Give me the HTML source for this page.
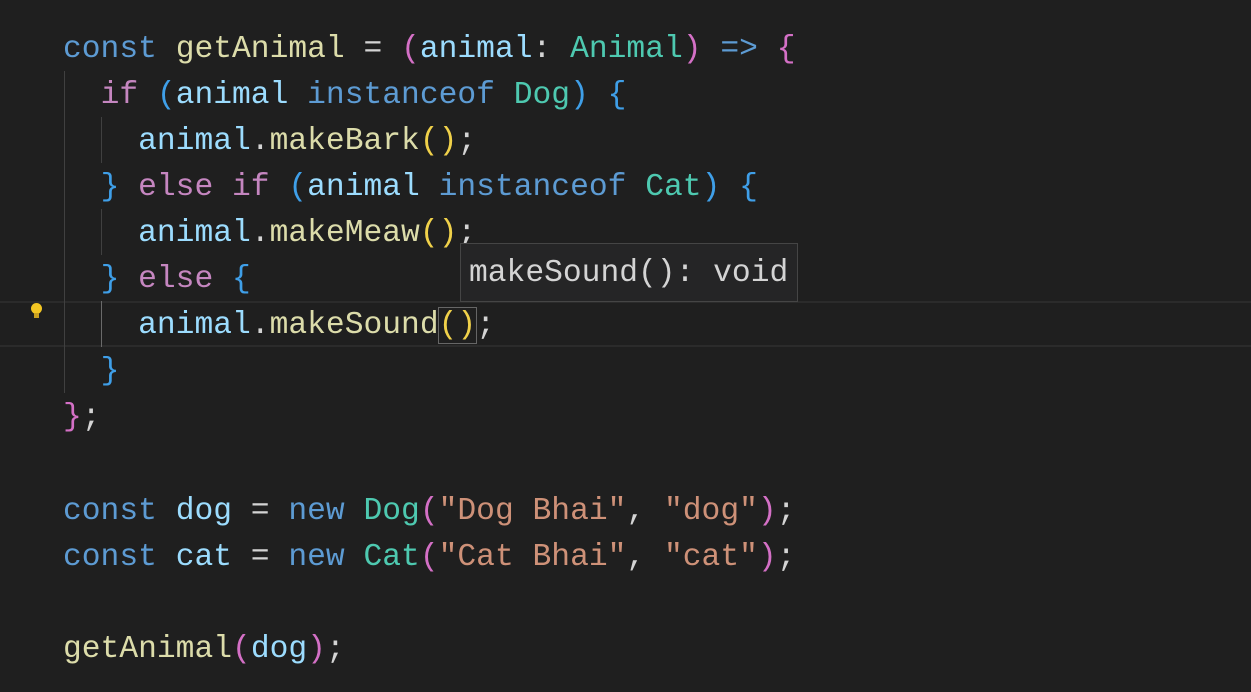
<!DOCTYPE html>
<html><head><style>
html,body{margin:0;padding:0;background:#1f1f1f;width:1251px;height:692px;overflow:hidden}
.l{position:absolute;left:63px;height:46px;line-height:46px;font-family:"Liberation Mono",monospace;font-size:31.3px;color:#d4d4d4;white-space:pre;letter-spacing:0}
.k{color:#5d9bd3}.f{color:#dcdcaa}.v{color:#9cdcfe}.c{color:#c586c0}.t{color:#4ec9b0}.s{color:#ce9178}
.p1{color:#d470c6}.p2{color:#3f9fe8}.p3{color:#f0d14a}
.g{position:absolute;width:1px;background:#404040}
</style></head><body>
<div style="position:absolute;left:0;top:301px;width:1251px;height:46px;border-top:2px solid #2b2b2b;border-bottom:2px solid #2b2b2b;box-sizing:border-box"></div>
<div class="g" style="left:64px;top:71px;height:322px"></div>
<div class="g" style="left:101px;top:117px;height:46px"></div>
<div class="g" style="left:101px;top:209px;height:46px"></div>
<div class="g" style="left:101px;top:301px;height:46px;background:#6a6a6a"></div>
<div style="position:absolute;left:31px;top:303px;width:11px;height:11px;border-radius:50%;background:#f3c623"></div>
<div style="position:absolute;left:34px;top:313px;width:5px;height:5px;background:#c9a020"></div>
<div class="l" style="top:27px"><span class="k">const</span> <span class="f">getAnimal</span> = <span class="p1">(</span><span class="v">animal</span>: <span class="t">Animal</span><span class="p1">)</span> <span class="k">=&gt;</span> <span class="p1">{</span></div>
<div class="l" style="top:73px">  <span class="c">if</span> <span class="p2">(</span><span class="v">animal</span> <span class="k">instanceof</span> <span class="t">Dog</span><span class="p2">)</span> <span class="p2">{</span></div>
<div class="l" style="top:119px">    <span class="v">animal</span>.<span class="f">makeBark</span><span class="p3">()</span>;</div>
<div class="l" style="top:165px">  <span class="p2">}</span> <span class="c">else</span> <span class="c">if</span> <span class="p2">(</span><span class="v">animal</span> <span class="k">instanceof</span> <span class="t">Cat</span><span class="p2">)</span> <span class="p2">{</span></div>
<div class="l" style="top:211px">    <span class="v">animal</span>.<span class="f">makeMeaw</span><span class="p3">()</span>;</div>
<div class="l" style="top:257px">  <span class="p2">}</span> <span class="c">else</span> <span class="p2">{</span></div>
<div class="l" style="top:303px">    <span class="v">animal</span>.<span class="f">makeSound</span><span class="p3" style="outline:1px solid #666">()</span>;</div>
<div class="l" style="top:349px">  <span class="p2">}</span></div>
<div class="l" style="top:395px"><span class="p1">}</span>;</div>
<div class="l" style="top:489px"><span class="k">const</span> <span class="v">dog</span> = <span class="k">new</span> <span class="t">Dog</span><span class="p1">(</span><span class="s">"Dog Bhai"</span>, <span class="s">"dog"</span><span class="p1">)</span>;</div>
<div class="l" style="top:535px"><span class="k">const</span> <span class="v">cat</span> = <span class="k">new</span> <span class="t">Cat</span><span class="p1">(</span><span class="s">"Cat Bhai"</span>, <span class="s">"cat"</span><span class="p1">)</span>;</div>
<div class="l" style="top:627px"><span class="f">getAnimal</span><span class="p1">(</span><span class="v">dog</span><span class="p1">)</span>;</div>
<div style="position:absolute;left:460px;top:243px;width:338px;height:59px;background:#252526;border:1px solid #454545;box-sizing:border-box"></div>
<div class="l" style="left:469px;top:251px;color:#d4d4d4">makeSound(): void</div>
</body></html>
